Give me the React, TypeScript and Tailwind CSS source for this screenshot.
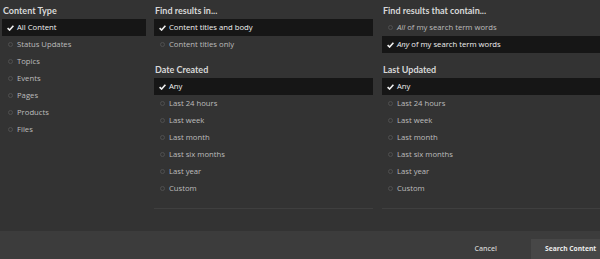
import React from "react"

type Opt = { label: React.ReactNode; selected?: boolean }

function Check() {
  return (
    <svg width="7" height="6" viewBox="0 0 7 6" className="shrink-0">
      <path d="M0.6 3.1 L2.6 5 L6.4 0.7" fill="none" stroke="#f2f2f2" strokeWidth="1.6" />
    </svg>
  )
}

function Radio() {
  return (
    <span className="w-[7px] flex justify-center shrink-0">
      <span className="block w-[5px] h-[5px] rounded-full border border-[#4f4f4f]" />
    </span>
  )
}

function Row({ label, selected }: Opt) {
  return (
    <div
      className={
        "h-[17px] flex items-center gap-[2px] pl-[5px] " +
        (selected ? "bg-[#161616] text-[#f0f0f0]" : "text-[#bdbdbd]")
      }
    >
      {selected ? <Check /> : <Radio />}
      <span className="pl-[1px]">{label}</span>
    </div>
  )
}

function Group({ title, options, first }: { title: string; options: Opt[]; first?: boolean }) {
  return (
    <div className={first ? "pt-[3px]" : "pt-[9px]"}>
      <div
        className="h-[16px] flex items-center pl-[1px] text-[9px] font-bold text-[#d8d8d8]"
        style={{ fontFamily: 'Lato, "Open Sans", sans-serif' }}
      >
        {title}
      </div>
      {options.map((o, i) => (
        <Row key={i} {...o} />
      ))}
    </div>
  )
}

const dates: Opt[] = [
  { label: "Any", selected: true },
  { label: "Last 24 hours" },
  { label: "Last week" },
  { label: "Last month" },
  { label: "Last six months" },
  { label: "Last year" },
  { label: "Custom" },
]

export default function App() {
  return (
    <div
      className="w-[600px] h-[259px] bg-[#333333] flex flex-col overflow-hidden text-[7.7px]"
      style={{ fontFamily: '"Open Sans", "Noto Sans", sans-serif' }}
    >
      <div className="flex-1 flex pl-[2px]">
        <div className="w-[144px]">
          <Group
            first
            title="Content Type"
            options={[
              { label: "All Content", selected: true },
              { label: "Status Updates" },
              { label: "Topics" },
              { label: "Events" },
              { label: "Pages" },
              { label: "Products" },
              { label: "Files" },
            ]}
          />
        </div>
        <div className="w-[219px] ml-[8px] flex flex-col">
          <Group
            first
            title="Find results in..."
            options={[{ label: "Content titles and body", selected: true }, { label: "Content titles only" }]}
          />
          <Group title="Date Created" options={dates} />
          <div className="mt-[11px] border-t border-[#3f3f3f]" />
        </div>
        <div className="flex-1 ml-[9px] flex flex-col">
          <Group
            first
            title="Find results that contain..."
            options={[
              { label: <><i>All</i> of my search term words</> },
              { label: <><i>Any</i> of my search term words</>, selected: true },
            ]}
          />
          <Group title="Last Updated" options={dates} />
          <div className="mt-[11px] border-t border-[#3f3f3f]" />
        </div>
      </div>
      <div className="h-[28px] bg-[#3c3c3c] flex justify-end items-end">
        <button className="h-[20px] px-[34px] text-[#cfcfcf] font-semibold text-[7px]">Cancel</button>
        <button className="h-[20px] w-[69px] bg-[#474747] text-[#ececec] font-bold text-[6.7px] text-left pl-[14px]">
          Search Content
        </button>
      </div>
    </div>
  )
}
